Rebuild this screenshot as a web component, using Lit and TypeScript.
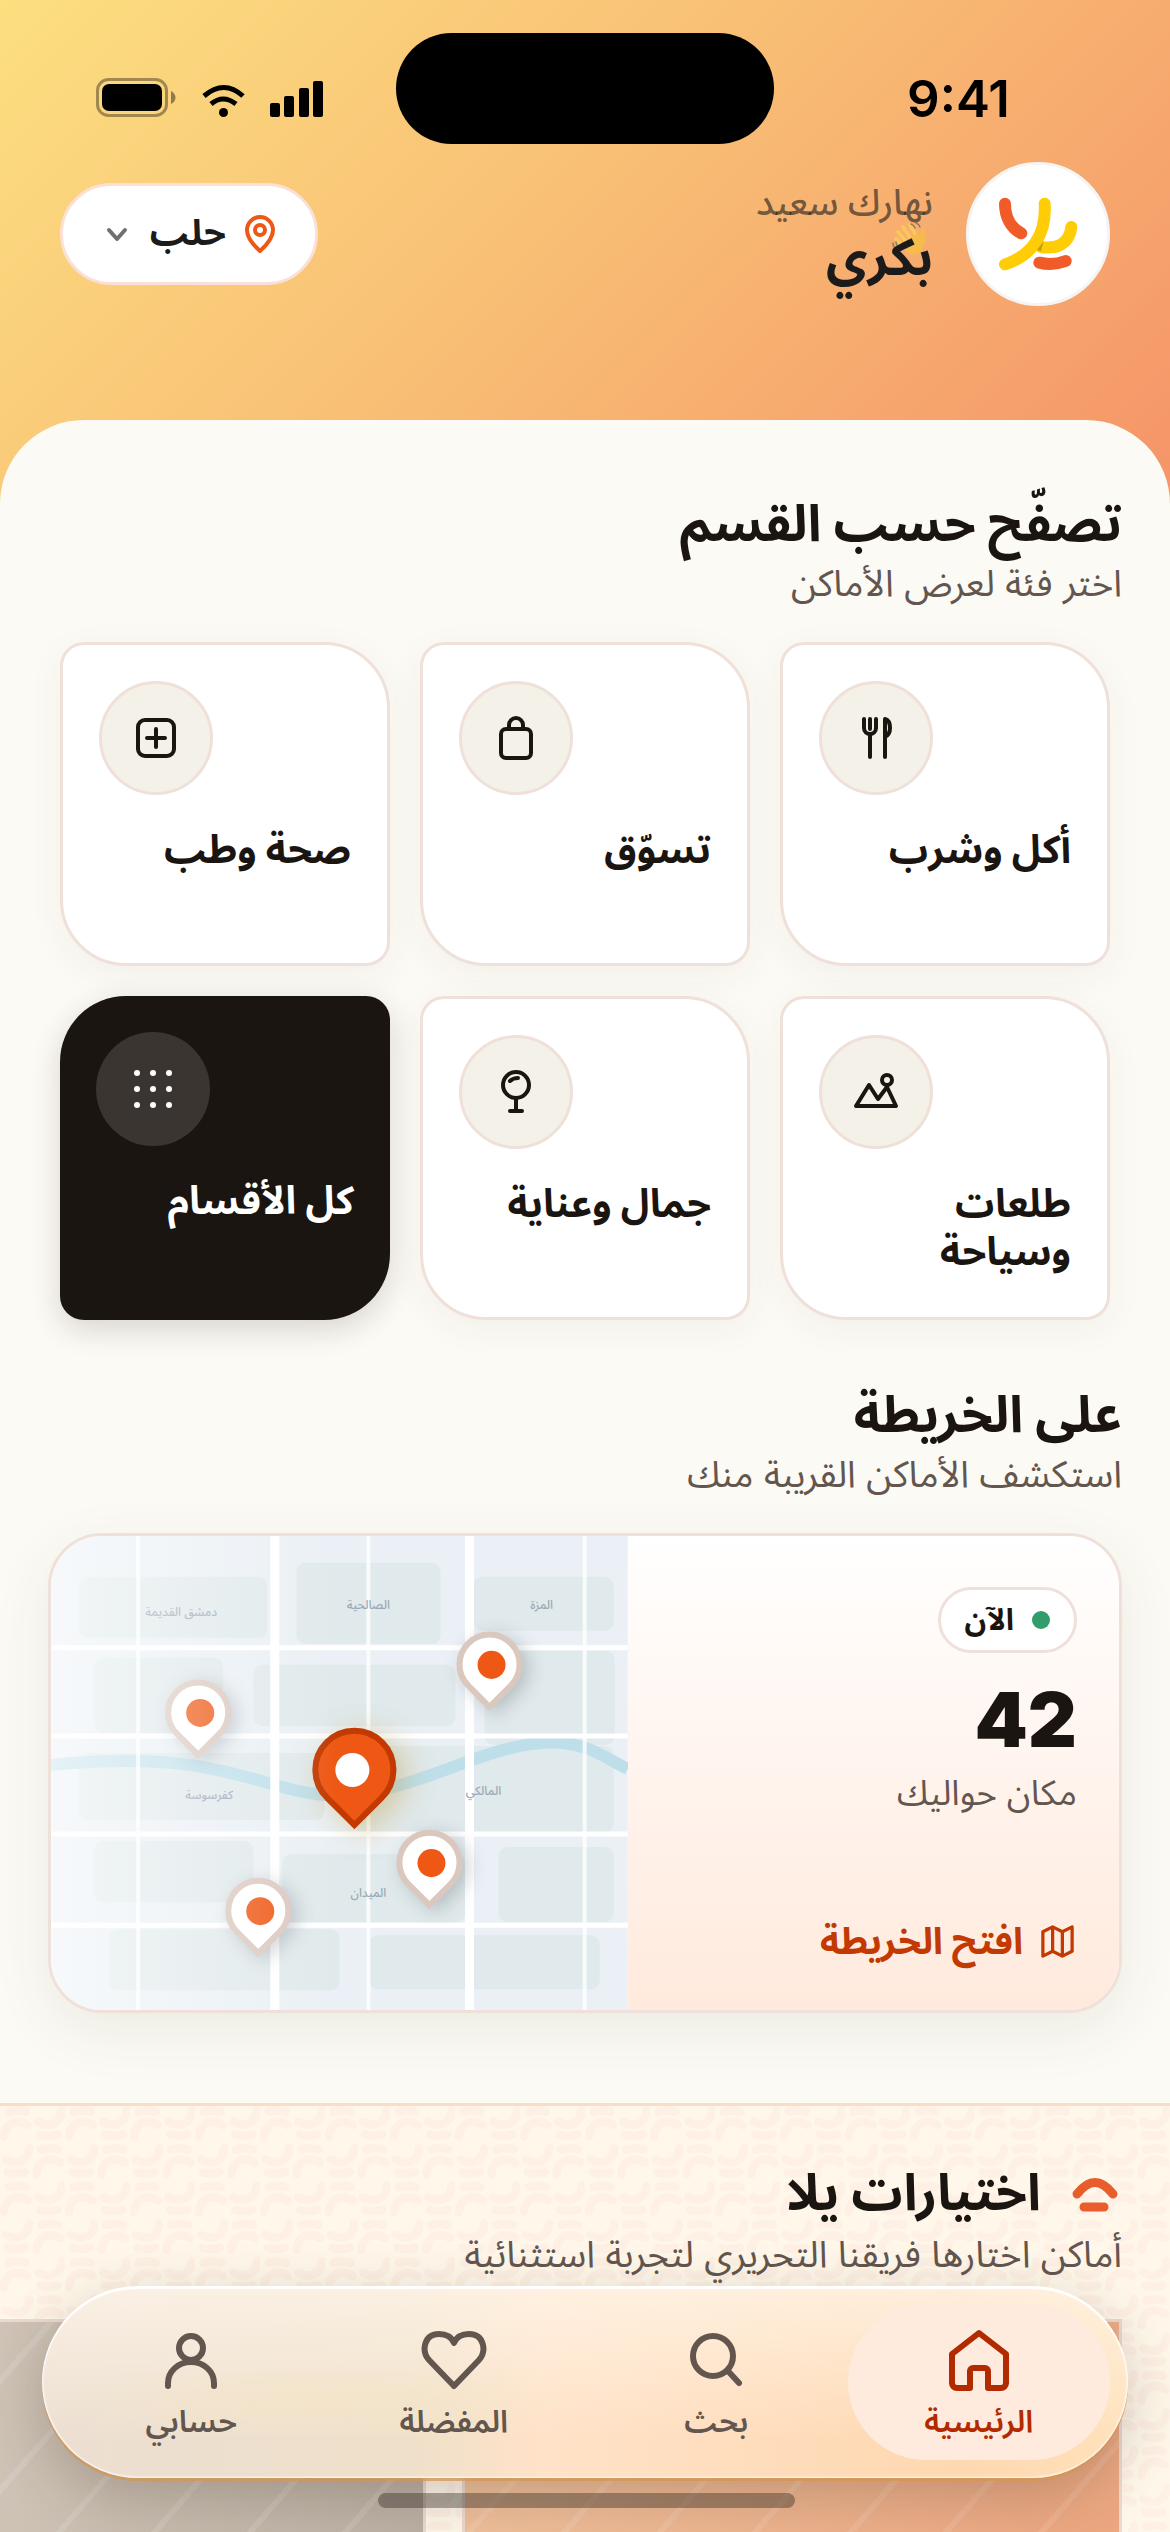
import { LitElement, html, svg, css, nothing } from "lit";
import type { SVGTemplateResult } from "lit";
import { customElement, property } from "lit/decorators.js";
import { classMap } from "lit/directives/class-map.js";

const icons: Record<string, SVGTemplateResult> = {
  food: svg`<path d="M-12-19v9a6 6 0 0 0 12 0v-9M-6-19v10M-6-4V19M9-19V19M9-19c4 1 5 5 5 9s-1 7-5 9"/>`,
  bag: svg`<rect x="-15" y="-9" width="30" height="29" rx="5"/><path d="M-7-9v-4a7 7 0 0 1 14 0v4"/>`,
  health: svg`<rect x="-18" y="-18" width="36" height="36" rx="7"/><path d="M-9 0H9M0-9V9"/>`,
  trips: svg`<path d="M-20 14L-7-7L2 7L11-5L20 14Z"/><circle cx="11" cy="-12" r="5"/>`,
  beauty: svg`<circle cx="0" cy="-7" r="13"/><path d="M0 6V19M-6 19H6M-6-11Q-3-14 2-14"/>`,
  all: svg`${[-16, 0, 16].map((y) => [-16, 0, 16].map((x) => svg`<circle cx=${x} cy=${y} r="3" fill="currentColor" stroke="none"/>`))}`,
};

interface Category { label: string; icon: string; dark?: boolean }
const categories: Category[] = [
  { label: "أكل وشرب", icon: "food" },
  { label: "تسوّق", icon: "bag" },
  { label: "صحة وطب", icon: "health" },
  { label: "طلعات وسياحة", icon: "trips" },
  { label: "جمال وعناية", icon: "beauty" },
  { label: "كل الأقسام", icon: "all", dark: true },
];

const tabs = [
  { label: "الرئيسية", active: true, icon: svg`<path d="M0-28L27-7V22a5 5 0 0 1-5 5H9V10a3 3 0 0 0-3-3H-6a3 3 0 0 0-3 3V27H-22a5 5 0 0 1-5-5V-7Z"/>` },
  { label: "بحث", active: false, icon: svg`<circle cx="-3" cy="-5" r="20"/><path d="M12 10L23 22"/>` },
  { label: "المفضلة", active: false, icon: svg`<path d="M0 25L-25-1C-33-10-30-27-15-27C-7-27-2-23 0-18C2-23 7-27 15-27C30-27 33-10 25-1Z"/>` },
  { label: "حسابي", active: false, icon: svg`<circle cx="0" cy="-13" r="12"/><path d="M-23 25v-3a23 21 0 0 1 46 0v3"/>` },
];

const blocks = [
  [28, 41, 188, 61], [245, 27, 144, 81], [422, 41, 140, 54], [43, 122, 129, 75],
  [202, 129, 202, 61], [433, 115, 130, 94], [28, 217, 245, 67], [303, 210, 259, 86],
  [43, 305, 159, 61], [231, 318, 183, 68], [447, 311, 115, 75], [58, 393, 230, 61], [318, 399, 230, 54],
];
const districts = [
  { x: 130, y: 80, name: "دمشق القديمة" }, { x: 317, y: 73, name: "الصالحية" },
  { x: 490, y: 73, name: "المزة" }, { x: 158, y: 263, name: "كفرسوسة" },
  { x: 432, y: 259, name: "المالكي" }, { x: 317, y: 361, name: "الميدان" },
];
const pins = [[438, 129], [147, 177], [378, 327], [207, 375]];

@customElement("place-map")
export class PlaceMap extends LitElement {
  static styles = css`
    :host { display: block; overflow: hidden; }
    .map { display: block; width: 100%; height: 100%; }
    .name { font: 500 12px "Inter", "Noto Sans Arabic", "Noto Sans", sans-serif; fill: #9aa8b6; text-anchor: middle; }
    .pin { filter: drop-shadow(6px 4px 9px rgba(27, 40, 50, 0.22)); }
    .main { filter: drop-shadow(9px 6px 15px rgba(190, 150, 50, 0.4)); }
  `;
  render() {
    return html`<svg class="map" viewBox="0 0 576 474" preserveAspectRatio="xMidYMid slice" role="img" aria-label="خريطة">
      <defs>
        <linearGradient id="fade"><stop offset="0" stop-color="#fff" stop-opacity=".6"/><stop offset=".5" stop-color="#fff" stop-opacity="0"/></linearGradient>
      </defs>
      <rect width="576" height="474" fill="#eaf0f5"/>
      ${blocks.map(([x, y, w, h]) => svg`<rect x=${x} y=${y} width=${w} height=${h} rx="9" fill="#e0e9eb"/>`)}
      <path d="M0 229C110 218 160 230 224 249S320 262 418 225S540 215 576 233" fill="none" stroke="#bedfea" stroke-width="12"/>
      <path d="M223.500 0V474M418 0V474" stroke="#fff" stroke-width="9"/>
      <path d="M0 112H576M0 200H576M0 298H576M0 389H576" stroke="#fff" stroke-width="5"/>
      <path d="M87 0V474M317 0V474M533 0V474" stroke="#fff" stroke-opacity=".8" stroke-width="4"/>
      ${districts.map((d) => svg`<text class="name" x=${d.x} y=${d.y}>${d.name}</text>`)}
      ${pins.map(([x, y]) => svg`<g class="pin">
        <path d="M${x - 21} ${y + 21}A30 30 0 1 1 ${x + 21} ${y + 21}L${x} ${y + 42}Z" fill="#fff" stroke="#dac8bf" stroke-width="6"/>
        <circle cx=${x + 2} cy=${y} r="14" fill="#ee5714"/></g>`)}
      <g class="main">
        <path d="M276 262A39 39 0 1 1 330 262L303 289Z" fill="#ee5714" stroke="#c23a02" stroke-width="6"/>
        <circle cx="301" cy="234" r="17" fill="#fff"/>
      </g>
      <rect width="576" height="474" fill="url(#fade)"/>
    </svg>`;
  }
}

@customElement("category-card")
export class CategoryCard extends LitElement {
  @property({ attribute: false }) item!: Category;
  static styles = css`
    :host { display: flex; }
    .card { flex: 1; min-width: 0; box-sizing: border-box; min-height: 324px; padding: 36px; display: flex; flex-direction: column; gap: 30px;
      font: inherit; color: #1b1511; text-align: start; background: #fff; border: 3px solid #f0e0da; cursor: pointer;
      border-radius: 24px 66px 24px 66px; box-shadow: 0 9px 36px rgba(60, 50, 30, 0.05); }
    .dark { background: #1b1511; color: #fff; border: 0; border-radius: 66px 24px 66px 24px; box-shadow: 0 9px 30px rgba(27, 21, 17, 0.16); }
    .disc { align-self: flex-end; box-sizing: border-box; width: 114px; height: 114px; border-radius: 50%; display: grid; place-items: center;
      background: #f4f1e8; border: 3px solid #f0e0da; }
    .dark .disc { background: #3b3532; border: 0; }
    .glyph { width: 48px; height: 48px; fill: none; stroke: currentColor; stroke-width: 4; stroke-linecap: round; stroke-linejoin: round; }
    .label { font-size: 39px; line-height: 48px; font-weight: 700; }
  `;
  render() {
    const { label, icon, dark } = this.item;
    return html`<button class=${classMap({ card: true, dark: !!dark })}>
      <span class="disc"><svg class="glyph" viewBox="-24 -24 48 48" aria-hidden="true">${icons[icon]}</svg></span>
      <span class="label">${label}</span>
    </button>`;
  }
}

@customElement("app-root")
export class AppRoot extends LitElement {
  static styles = css`
    :host { display: flex; flex-direction: column; min-height: 100vh; position: relative; overflow: hidden; direction: rtl;
      background: #fcfaf4; color: #1b1511; font-family: "Inter", "Noto Sans Arabic", "Noto Sans", sans-serif; }
    .hero { background: linear-gradient(135deg, #fcdf80 0%, #f8bc74 50%, #f59468 100%); padding-bottom: 198px; }
    .status { display: grid; grid-template-columns: 1fr 378px 1fr; height: 162px; align-items: start; color: #000; }
    .clock { justify-self: center; font-size: 51px; line-height: 60px; font-weight: 600; padding-top: 69px; padding-right: 27px; }
    .island { height: 111px; margin-top: 33px; border-radius: 56px; background: #000; }
    .signals { width: 228px; height: 42px; margin-top: 77px; justify-self: end; margin-left: 95px; }
    .greet { display: flex; align-items: center; padding: 0 60px; }
    .logo { width: 144px; height: 144px; box-sizing: border-box; border-radius: 50%; border: 3px solid #f5f5f5; background: #fff; }
    .hello { flex: 1; margin-inline-start: 33px; position: relative; }
    .hi { position: relative; margin: 0; font-size: 36px; line-height: 45px; font-weight: 500; color: rgba(27, 27, 27, 0.62); }
    .who { position: relative; margin: 0; font-size: 51px; line-height: 63px; font-weight: 700; color: #1b1b1b; }
    .wave { position: absolute; right: 6px; top: 42px; width: 36px; height: 36px; }
    .city { display: flex; align-items: center; gap: 15px; height: 102px; width: 258px; box-sizing: border-box; padding: 0 36px 0 42px; border-radius: 51px;
      border: 3px solid #fbe0d8; background: #fff; font: inherit; font-size: 36px; font-weight: 700; color: #1b1b1b; cursor: pointer; }
    .pinico { width: 38px; height: 42px; }
    .chev { width: 24px; height: 24px; margin-inline-start: auto; }
    .sheet { margin-top: -84px; padding-top: 69px; border-radius: 84px 84px 0 0; background: #fcfaf4; position: relative; }
    .head { padding: 0 48px; }
    h2 { margin: 0; font-size: 51px; line-height: 68px; font-weight: 700; display: flex; align-items: center; gap: 27px; }
    .sub { margin: 0; font-size: 37px; line-height: 51px; color: #62564f; }
    .grid { display: grid; grid-template-columns: repeat(3, 1fr); gap: 30px; padding: 34px 60px 60px; }
    .mapcard { display: flex; height: 480px; box-sizing: border-box; margin: 34px 48px 90px; border: 3px solid #f0e0da; border-radius: 54px; overflow: hidden;
      box-shadow: 0 18px 60px rgba(27, 60, 40, 0.08); background: #fff; }
    .info { width: 46%; display: flex; flex-direction: column; align-items: flex-start; box-sizing: border-box; padding: 51px 42px 39px;
      background: linear-gradient(180deg, #fff, #fff5ef 45%, #ffeadd); }
    .map { width: 54%; }
    .now { display: flex; align-items: center; gap: 18px; height: 66px; box-sizing: border-box; padding: 0 24px; border: 3px solid #f0e0da; border-radius: 33px;
      background: #fff; font-size: 30px; font-weight: 700; }
    .dot { width: 18px; height: 18px; border-radius: 50%; background: #329c6c; }
    .count { font-size: 76px; line-height: 84px; font-weight: 900; margin-top: 24px; }
    .near { font-size: 35px; line-height: 51px; color: #62564f; margin-top: 6px; }
    .open { margin-top: auto; display: flex; align-items: center; gap: 15px; font-size: 37px; line-height: 60px; font-weight: 700; color: #c23a02; text-decoration: none; }
    .mapico { width: 39px; height: 39px; }
    .picks { flex: 1; display: flex; flex-direction: column; position: relative; border-top: 3px solid #fadcc8; background: #fff8ea; padding-top: 50px; }
    .picks h2 { line-height: 72px; }
    .weave { position: absolute; inset: 0; width: 100%; height: 100%; }
    .picks .head { position: relative; }
    .sun { width: 54px; height: 42px; }
    .photos { flex: 1; display: flex; gap: 36px; margin: 40px 48px 0; min-height: 213px; position: relative; }
    .photo { flex: none; box-sizing: border-box; width: 100%; max-width: 660px; border: 3px solid #ecdad2; border-bottom: 0; }
    .warm { background: repeating-linear-gradient(131deg, transparent 0 66px, rgba(255, 255, 255, 0.1) 66px 72px), linear-gradient(135deg, #f0c8a4, #eca680); }
    .grey { background: repeating-linear-gradient(131deg, transparent 0 66px, rgba(255, 255, 255, 0.12) 66px 72px), linear-gradient(100deg, #d9cec0, #bcb0a4); }
    .nav { position: absolute; left: 42px; right: 42px; bottom: 54px; height: 192px; box-sizing: border-box; padding: 18px; display: flex; border-radius: 96px;
      background: radial-gradient(ellipse at 26% 60%, rgba(244, 229, 198, 0.7), transparent 24%), linear-gradient(180deg, rgba(255, 246, 234, 0.75), rgba(255, 246, 234, 0) 80%), linear-gradient(90deg, #ecdfd2 0%, #efe0ca 34%, #ffe2c8 46%, #fed8b0 85%, #fee2bc 100%);
      box-shadow: inset 0 3px 1px #fff, inset 0 0 2px 1px #fff, 0 3px 0 rgba(214, 150, 80, 0.75), 0 18px 60px rgba(60, 40, 30, 0.24); }
    .tab { flex: 1; display: flex; flex-direction: column; align-items: center; justify-content: center; gap: 6px; padding-top: 6px; border-radius: 78px; text-decoration: none;
      color: #62564f; font-size: 31px; line-height: 42px; font-weight: 600; }
    .tab.on { background: #ffebde; color: #b22a00; }
    .tabico { width: 66px; height: 66px; fill: none; stroke: currentColor; stroke-width: 6; stroke-linecap: round; stroke-linejoin: round; }
    .bar { position: absolute; bottom: 24px; left: 50%; width: 417px; height: 15px; margin-left: -207px; border-radius: 8px; background: rgba(40, 34, 30, 0.38); }
  `;

  private logo() {
    return html`<svg class="logo" viewBox="9 9 414 414" role="img" aria-label="يلا" fill="none" stroke-width="36" stroke-linecap="round">
      <path stroke="#f15a29" d="M117 125C117 165 135 198 166 214M220 302Q260 312 299 297"/>
      <path stroke="#ffcd05" d="M316 195C310 248 270 262 225 255"/>
      <path stroke="#ffcd05" d="M236 125C242 215 200 280 117 307"/>
      <path fill="#c49f0a" stroke="none" d="M233 238L213 264L225 267Z"/>
    </svg>`;
  }

  render() {
    return html`
      <header class="hero">
        <div class="status">
          <span class="clock">9:41</span>
          <span class="island"></span>
          <svg class="signals" viewBox="95 77 228 42" aria-hidden="true">
            <rect x="97.500" y="79.500" width="69" height="36" rx="11" fill="none" stroke="#000" stroke-opacity=".36" stroke-width="3"/>
            <rect x="102" y="84" width="60" height="27" rx="7"/>
            <path d="M171 91c6 3 6 10 0 13Z" fill-opacity=".42"/>
            <path d="M204 96q20-17 39 0M211 104q12-10 25 0" fill="none" stroke="#000" stroke-width="5"/>
            <circle cx="223.500" cy="112.500" r="4.500"/>
            <rect x="270" y="103" width="10" height="14" rx="2"/><rect x="284" y="96" width="10" height="21" rx="2"/>
            <rect x="299" y="88" width="10" height="29" rx="2"/><rect x="313" y="81" width="10" height="36" rx="2"/>
          </svg>
        </div>
        <div class="greet">
          ${this.logo()}
          <div class="hello">
            <svg class="wave" viewBox="0 0 36 36" aria-hidden="true" fill="none" stroke-linecap="round">
              <path d="M7 10L17 22M12 5L20 17M19 3L26 15M5 17L15 26" stroke="#f9c75a" stroke-width="4"/>
              <path d="M12 21L26 11Q29 15 30 9Q32 4 34 10Q35 24 29 30Q20 36 14 28Z" fill="#f6bb4a"/>
              <path d="M20 2q3 1 4 4M25 1q3 1 4 4M2 21q0 4 3 6M5 20q0 3 2 4" stroke="#907a60" stroke-width="1.500"/>
            </svg>
            <p class="hi">نهارك سعيد</p>
            <p class="who">بكري</p>
          </div>
          <button class="city">
            <svg class="pinico" viewBox="-19 -21 38 42" fill="none" stroke="#ee5714" stroke-width="4" stroke-linejoin="round" aria-hidden="true">
              <path d="M0 17C-9 9-13 3-13-4a13 13 0 0 1 26 0C13 3 9 9 0 17Z"/><circle cx="0" cy="-4" r="5"/></svg>
            <span>حلب</span>
            <svg class="chev" viewBox="0 0 24 24" fill="none" stroke="#707070" stroke-width="4" stroke-linecap="round" stroke-linejoin="round" aria-hidden="true"><path d="M4 8l8 9l8-9"/></svg>
          </button>
        </div>
      </header>
      <main class="sheet">
        <div class="head"><h2>تصفّح حسب القسم</h2><p class="sub">اختر فئة لعرض الأماكن</p></div>
        <div class="grid">${categories.map((c) => html`<category-card .item=${c}></category-card>`)}</div>
        <div class="head"><h2>على الخريطة</h2><p class="sub">استكشف الأماكن القريبة منك</p></div>
        <section class="mapcard">
          <div class="info">
            <span class="now"><span class="dot"></span>الآن</span>
            <span class="count">42</span>
            <span class="near">مكان حواليك</span>
            <a class="open" href="#map">
              <svg class="mapico" viewBox="0 0 24 24" fill="none" stroke="currentColor" stroke-width="2" stroke-linejoin="round" aria-hidden="true"><path d="M3 6l6-3l6 3l6-3v15l-6 3l-6-3l-6 3ZM9 3v15M15 6v15"/></svg>
              افتح الخريطة</a>
          </div>
          <place-map class="map"></place-map>
        </section>
      </main>
      <section class="picks">
        <svg class="weave" aria-hidden="true">
          <defs>
            <g id="knot" fill="none" stroke="#fef0e4" stroke-width="26" stroke-linecap="round">
              <path d="M26 17Q52 10 77 17M12 91C16 46 56 38 83 57M115 47C145 65 184 54 185 13M121 86Q147 93 172 85"/>
            </g>
            <pattern id="knots" width="195" height="226.500" patternUnits="userSpaceOnUse" patternTransform="scale(.3333)">
              <use href="#knot"/><use href="#knot" x="97.500" y="113.250"/><use href="#knot" x="-97.500" y="113.250"/>
            </pattern>
          </defs>
          <rect width="100%" height="100%" fill="url(#knots)"/>
        </svg>
        <div class="head">
          <h2><svg class="sun" viewBox="0 0 54 42" fill="none" stroke="#e95c2b" stroke-width="9" stroke-linecap="round" aria-hidden="true"><path d="M9 23Q27 0 45 23M16 36H36"/></svg>اختيارات يلا</h2>
          <p class="sub">أماكن اختارها فريقنا التحريري لتجربة استثنائية</p>
        </div>
        <div class="photos"><div class="photo warm"></div><div class="photo grey"></div></div>
      </section>
      <div class="bar"></div>
      <nav class="nav" aria-label="التنقل">
        ${tabs.map((t) => html`<a class=${classMap({ tab: true, on: t.active })} href="#" aria-current=${t.active ? "page" : nothing}>
          <svg class="tabico" viewBox="-33 -33 66 66" aria-hidden="true">${t.icon}</svg>${t.label}</a>`)}
      </nav>
    `;
  }
}
